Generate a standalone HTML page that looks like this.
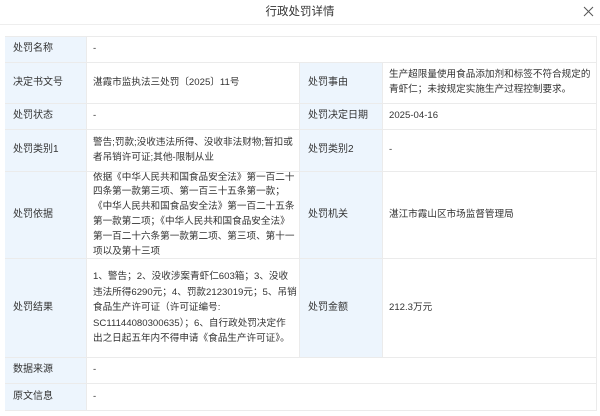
<!DOCTYPE html><html><head><meta charset="utf-8"><style>
body{margin:0;width:600px;height:416px;background:#fff;font-family:"Liberation Sans","Noto Sans CJK SC",sans-serif;color:#333;font-size:10px;position:relative;overflow:hidden}
.h{position:absolute;left:0;top:0;width:600px;height:24px;border-bottom:1px solid #eee;text-align:center;line-height:24px;font-size:11.5px;color:#333}
.x{position:absolute;right:6px;top:6px}
.c{position:absolute;box-sizing:border-box;border-right:1px solid #ebebeb;border-bottom:1px solid #ebebeb;display:flex;align-items:center;padding:0 5px 0 6px;line-height:14.8px;white-space:nowrap;overflow:hidden;font-size:9.6px}
.l{background:#edf5fd;padding-left:8px;font-size:10px}
</style></head><body>
<div class="h">行政处罚详情<svg class="x" width="11" height="11" viewBox="0 0 11 11"><path d="M1 1L10 10M10 1L1 10" stroke="#555" stroke-width="1" fill="none"/></svg></div>
<div style="position:absolute;left:5px;top:36px;width:592px;height:375px;border-top:1px solid #ebebeb;border-left:1px solid #ebebeb;box-sizing:border-box"></div>
<div class="c l" style="left:5px;top:37px;width:82px;height:26px">处罚名称</div>
<div class="c" style="left:87px;top:37px;width:510px;height:26px">-</div>
<div class="c l" style="left:5px;top:63px;width:82px;height:41px">决定书文号</div>
<div class="c" style="left:87px;top:63px;width:213px;height:41px">湛霞市监执法三处罚〔2025〕11号</div>
<div class="c l" style="left:300px;top:63px;width:83px;height:41px">处罚事由</div>
<div class="c" style="left:383px;top:63px;width:214px;height:41px">生产超限量使用食品添加剂和标签不符合规定的<br>青虾仁；未按规定实施生产过程控制要求。</div>
<div class="c l" style="left:5px;top:104px;width:82px;height:26px">处罚状态</div>
<div class="c" style="left:87px;top:104px;width:213px;height:26px">-</div>
<div class="c l" style="left:300px;top:104px;width:83px;height:26px">处罚决定日期</div>
<div class="c" style="left:383px;top:104px;width:214px;height:26px">2025-04-16</div>
<div class="c l" style="left:5px;top:130px;width:82px;height:42px">处罚类别1</div>
<div class="c" style="left:87px;top:130px;width:213px;height:42px">警告;罚款;没收违法所得、没收非法财物;暂扣或<br>者吊销许可证;其他-限制从业</div>
<div class="c l" style="left:300px;top:130px;width:83px;height:42px">处罚类别2</div>
<div class="c" style="left:383px;top:130px;width:214px;height:42px">-</div>
<div class="c l" style="left:5px;top:172px;width:82px;height:87px">处罚依据</div>
<div class="c" style="left:87px;top:172px;width:213px;height:87px">依据《中华人民共和国食品安全法》第一百二十<br>四条第一款第三项、第一百三十五条第一款；<br>《中华人民共和国食品安全法》第一百二十五条<br>第一款第二项；《中华人民共和国食品安全法》<br>第一百二十六条第一款第二项、第三项、第十一<br>项以及第十三项</div>
<div class="c l" style="left:300px;top:172px;width:83px;height:87px">处罚机关</div>
<div class="c" style="left:383px;top:172px;width:214px;height:87px">湛江市霞山区市场监督管理局</div>
<div class="c l" style="left:5px;top:259px;width:82px;height:99px">处罚结果</div>
<div class="c" style="left:87px;top:259px;width:213px;height:99px;line-height:15.5px">1、警告；2、没收涉案青虾仁603箱；3、没收<br>违法所得6290元；4、罚款2123019元；5、吊销<br>食品生产许可证（许可证编号:<br>SC11144080300635）；6、自行政处罚决定作<br>出之日起五年内不得申请《食品生产许可证》。</div>
<div class="c l" style="left:300px;top:259px;width:83px;height:99px">处罚金额</div>
<div class="c" style="left:383px;top:259px;width:214px;height:99px">212.3万元</div>
<div class="c l" style="left:5px;top:358px;width:82px;height:26px">数据来源</div>
<div class="c" style="left:87px;top:358px;width:510px;height:26px">-</div>
<div class="c l" style="left:5px;top:384px;width:82px;height:27px">原文信息</div>
<div class="c" style="left:87px;top:384px;width:510px;height:27px">-</div>
</body></html>
